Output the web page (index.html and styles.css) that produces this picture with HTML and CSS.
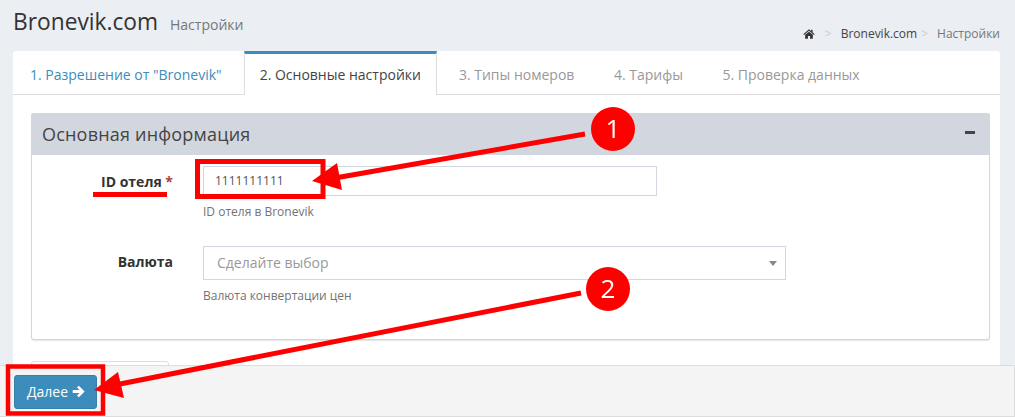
FILE: index.html
```html
<!DOCTYPE html>
<html lang="ru">
<head>
    <meta charset="UTF-8">
    <title>Bronevik.com - Настройки</title>
    <link rel="stylesheet" href="styles.css">
</head>
<body>
    <header class="page-header">
        <h1>Bronevik.com <small>Настройки</small></h1>
        <div class="breadcrumb">
            <svg class="home-icon" viewBox="0 0 16 14" width="12" height="10"><path d="M8 0.5 L11 3 V1.2 H13 V4.7 L16 7.3 L15 8.3 L8 2.5 L1 8.3 L0 7.3 Z M2.6 8.2 L8 3.8 L13.4 8.2 V13.5 H9.5 V9.8 H6.5 V13.5 H2.6 Z"/></svg>
            <span class="sep">&gt;</span>
            <span class="crumb-link">Bronevik.com</span>
            <span class="sep">&gt;</span>
            <span class="crumb-current">Настройки</span>
        </div>
    </header>

    <div class="tabs-card">
        <ul class="tabs">
            <li class="tab done">1. Разрешение от "Bronevik"</li>
            <li class="tab active">2. Основные настройки</li>
            <li class="tab">3. Типы номеров</li>
            <li class="tab">4. Тарифы</li>
            <li class="tab">5. Проверка данных</li>
        </ul>

        <div class="tab-body">
            <section class="panel">
                <div class="panel-head">
                    <h2>Основная информация</h2>
                    <span class="collapse"></span>
                </div>
                <div class="panel-body">
                    <div class="form-row first">
                        <label class="form-label">ID отеля <span class="req">*</span></label>
                        <div class="form-field">
                            <div class="input short">1111111111</div>
                            <p class="hint">ID отеля в Bronevik</p>
                        </div>
                    </div>
                    <div class="form-row">
                        <label class="form-label">Валюта</label>
                        <div class="form-field">
                            <div class="input select">Сделайте выбор<span class="caret"></span></div>
                            <p class="hint">Валюта конвертации цен</p>
                        </div>
                    </div>
                </div>
            </section>
            <div class="next-box"></div>
        </div>
    </div>

    <footer class="footer-bar">
        <button class="btn-next">Далее
            <svg class="arrow-icon" viewBox="0 0 14 14" width="13" height="13"><path d="M7.4 0.8 L13.6 7 L7.4 13.2 L5.4 11.2 L8.2 8.6 H0.8 V5.4 H8.2 L5.4 2.8 Z"/></svg>
        </button>
    </footer>

    <!-- пометки поверх скриншота -->
    <svg class="notes" width="1015" height="417" viewBox="0 0 1015 417">
        <g fill="none" stroke="#f00">
            <rect x="197.5" y="161.5" width="125.5" height="35" stroke-width="5"/>
            <rect x="8" y="366.5" width="95" height="47" stroke-width="4.5"/>
            <line x1="93" y1="194.5" x2="167" y2="194.5" stroke-width="5"/>
            <line x1="335" y1="178" x2="585" y2="134" stroke-width="5"/>
            <line x1="115" y1="385" x2="581" y2="293" stroke-width="5"/>
        </g>
        <polygon fill="#f00" points="312,181 337,163 342,190"/>
        <polygon fill="#f00" points="94,390 118,372 124,398"/>
        <circle cx="613" cy="129" r="22" fill="#f00"/>
        <circle cx="608" cy="289" r="22" fill="#f00"/>
        <text x="613" y="138" class="note-num">1</text>
        <text x="608" y="298" class="note-num">2</text>
    </svg>
</body>
</html>
```

FILE: styles.css
```css
body {
    margin: 0;
    height: 417px;
    overflow: hidden;
    background-color: #ebeef3;
    font-family: "Open Sans", sans-serif;
    font-size: 14px;
    color: #333;
}
.page-header {
    display: flex;
    justify-content: space-between;
    align-items: flex-end;
    height: 51px;
    padding: 0 15px 9px 13px;
    box-sizing: border-box;
}
h1 {
    margin: 0;
    font-size: 22.75px;
    font-weight: 400;
    line-height: 34px;
    color: #333;
}
h1 small {
    margin-left: 6px;
    font-size: 14px;
    color: #777;
}
.breadcrumb {
    display: flex;
    align-items: center;
    font-size: 12px;
    line-height: 16px;
    color: #777;
}
.home-icon {
    fill: #333;
    margin-right: 10px;
}
.sep {
    color: #ccc;
    margin-right: 9px;
}
.crumb-link {
    color: #444;
    margin-right: 4px;
}
.crumb-current {
    color: #777;
}
.tabs-card {
    margin: 0 15px 0 13px;
    height: 366px;
    background-color: #fff;
    border-radius: 3px;
}
.tabs {
    display: flex;
    height: 44px;
    margin: 0;
    padding: 0;
    list-style: none;
    box-sizing: border-box;
    border-bottom: 1px solid #ddd;
}
.tab {
    padding: 14px 17px 0;
    margin-right: 5.5px;
    height: 44px;
    box-sizing: border-box;
    line-height: 20px;
    color: #999;
    white-space: nowrap;
}
.tab.done {
    color: #3c8dbc;
    margin-right: 6px;
    padding-right: 16px;
}
.tab.active {
    padding: 11px 15px 0;
    margin-right: 5px;
    color: #444;
    background-color: #fff;
    border-top: 3px solid #3c8dbc;
    border-left: 1px solid #ddd;
    border-right: 1px solid #ddd;
}
.tab-body {
    padding: 18px 10px 0 18px;
}
.panel {
    height: 227px;
    box-sizing: border-box;
    border: 1px solid #d2d6de;
    border-top: 0;
    border-radius: 3px;
    box-shadow: 0 1px 1px rgba(0,0,0,0.1);
}
.panel-head {
    display: flex;
    justify-content: space-between;
    align-items: center;
    height: 42px;
    margin: 0 -1px;
    padding: 0 15px 0 11px;
    background-color: #d2d6de;
    border-radius: 3px 3px 0 0;
}
h2 {
    margin: 0;
    font-size: 18px;
    font-weight: 400;
    letter-spacing: 0.2px;
    color: #444;
}
.collapse {
    width: 10px;
    height: 3px;
    margin-bottom: 3px;
    background-color: #444;
}
.form-row {
    display: flex;
    margin-bottom: 16px;
}
.form-row.first {
    padding-top: 11px;
    margin-bottom: 27px;
}
.form-label {
    width: 141px;
    padding-top: 6px;
    text-align: right;
    font-weight: 700;
    line-height: 20px;
    color: #333;
}
.req {
    color: #a94442;
}
.form-field {
    margin-left: 30px;
}
.input {
    box-sizing: border-box;
    height: 30px;
    width: 454px;
    padding: 0 11px;
    border: 1px solid #d2d6de;
    font-size: 12px;
    line-height: 28px;
    color: #555;
}
.input.select {
    position: relative;
    height: 34px;
    width: 583px;
    padding: 0 13px;
    font-size: 14px;
    line-height: 32px;
    color: #999;
}
.caret {
    position: absolute;
    right: 8px;
    top: 14px;
    border-top: 5px solid #888;
    border-left: 4px solid transparent;
    border-right: 4px solid transparent;
}
.hint {
    margin: 8px 0 0;
    font-size: 12px;
    line-height: 15px;
    color: #737373;
}
.next-box {
    width: 136px;
    height: 30px;
    margin-top: 21px;
    border: 1px solid #ddd;
    border-radius: 3px;
}
.footer-bar {
    position: fixed;
    left: 0;
    right: 0;
    bottom: 0;
    height: 52px;
    box-sizing: border-box;
    padding: 9px 14px;
    background-color: #f4f4f4;
    border: 1px solid #ddd;
    border-left: 0;
}
.btn-next {
    display: flex;
    align-items: center;
    gap: 4px;
    width: 83px;
    height: 34px;
    padding: 0 0 2px 12px;
    border: 1px solid #367fa9;
    border-radius: 3px;
    background-color: #3c8dbc;
    font-family: "Open Sans", sans-serif;
    font-size: 14px;
    color: #fff;
}
.arrow-icon {
    fill: #fff;
}
.notes {
    position: fixed;
    left: 0;
    top: 0;
}
.note-num {
    fill: #fff;
    font-family: "Open Sans", sans-serif;
    font-size: 26px;
    text-anchor: middle;
}
```
